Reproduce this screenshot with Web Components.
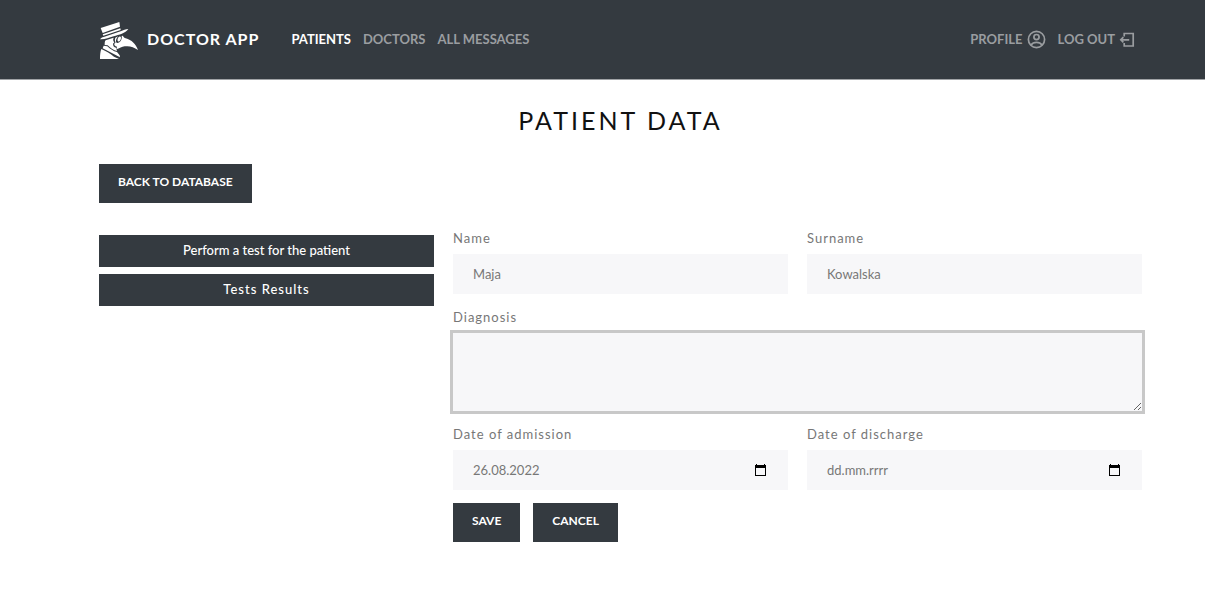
<!DOCTYPE html>
<html lang="en">
<head>
<meta charset="utf-8">
<title>Doctor App – Patient data</title>
<style>
  body { margin: 0; background: #fff; color: #111; font-family: Lato, "Open Sans", sans-serif; font-size: 13px; --dark: #343a40; --field: #f7f7f9; --muted: #777; }
  patient-page { display: block; }
</style>
</head>
<body>
<patient-page></patient-page>
<script>
const define = (name, html, setup) => customElements.define(name, class extends HTMLElement {
  connectedCallback() {
    if (this.shadowRoot) return;
    const root = this.attachShadow({ mode: 'open', delegatesFocus: true });
    const t = document.createElement('template');
    t.innerHTML = html;
    root.append(t.content.cloneNode(true));
    if (setup) setup(this, root);
  }
});

define('app-logo', `
  <style>
    :host { display: block; }
    a { display: flex; align-items: center; gap: 9px; color: #fff; text-decoration: none; font-size: 16px; line-height: 24px; font-weight: 700; letter-spacing: 1px; white-space: nowrap; }
    span { padding-bottom: 2px; }
    svg { display: block; }
  </style>
  <a href="#home">
    <svg width="39" height="38" viewBox="27 33 117 114" fill="#fff" aria-hidden="true">
      <path d="M32 54 88 36l2 14-52 19z"/>
      <path d="m38 73 53-18 1 5-52 17z"/>
      <path d="M30 88c3-4 6-6 11-7l51-17c8-3 15-7 23-7-9 13-28 17-44 22-15 4-26 10-41 9z"/>
      <path d="M47 91 71 83c-3 6-1 10 2 14l-4 4c0 7 3 10 9 12l3 10c-10-1-19-9-28-17l-9-1c0-6 0-11 3-14z"/>
      <path d="M76 83 84 79c-7 9-8 19-2 20 9 0 15-12 13-21l4-1c1 4 4 6 8 8 18 5 30 17 37 35-13-9-24-13-40-11-9 1-15 7-25 9l2-8c-6-2-9-5-8-9l4-4c-3-4-3-9-1-14z"/>
      <path d="M84 84c3-6 9-6 9 0 0 7-6 13-9 10-2-2-2-6 0-10z"/>
      <path d="m41 107 11 2c9 8 18 15 29 17l8 10 1 6-52-27z"/>
      <path d="M34 117c15 6 27 15 38 23l15 7H30c0-12 1-22 4-30z"/>
    </svg>
    <span><slot></slot></span>
  </a>`);

define('nav-link', `
  <style>
    :host { display: block; }
    a { display: flex; align-items: center; gap: 4px; color: #9a9da0; text-decoration: none; font-size: 13px; line-height: 20px; font-weight: 700; white-space: nowrap; }
    span { padding-bottom: 2px; }
    :host([active]) a { color: #fff; }
  </style>
  <a href="#"><span><slot></slot></span><slot name="icon"></slot></a>`,
  (el, root) => { root.querySelector('a').href = el.getAttribute('href') || '#'; });

define('app-header', `
  <style>
    :host { display: block; background: var(--dark); border-bottom: 1px solid #a0a3a6; }
    header { display: flex; align-items: center; justify-content: space-between; height: 79px; padding: 0 70px 0 99px; }
    .left { display: flex; align-items: center; gap: 32px; }
    nav { display: flex; align-items: center; gap: 12px; }
    svg { display: block; }
  </style>
  <header>
    <div class="left">
      <app-logo>DOCTOR APP</app-logo>
      <nav aria-label="Main">
        <nav-link active href="#patients">PATIENTS</nav-link>
        <nav-link href="#doctors">DOCTORS</nav-link>
        <nav-link href="#messages">ALL MESSAGES</nav-link>
      </nav>
    </div>
    <nav aria-label="Account">
      <nav-link href="#profile">PROFILE
        <svg slot="icon" width="19" height="19" viewBox="0 0 19 19" fill="none" stroke="#9a9da0" stroke-width="1.7" aria-hidden="true"><circle cx="9.5" cy="9.5" r="8.1"/><circle cx="9.5" cy="7.1" r="2.6"/><path d="M4 15c1.2-1.7 3.2-2.6 5.500-2.600s4.300.9 5.500 2.600"/></svg>
      </nav-link>
      <nav-link href="#logout">LOG OUT
        <svg slot="icon" width="16" height="17" viewBox="0 0 16 17" fill="none" stroke="#9a9da0" stroke-width="1.7" aria-hidden="true"><path d="M5.200 5.500V2.500h9v12.500H5.200V12M1.800 8.800h8.400M4.400 6.200 1.800 8.800l2.600 2.600"/></svg>
      </nav-link>
    </nav>
  </header>`);

define('app-button', `
  <style>
    :host { display: block; }
    button { display: block; width: 100%; height: 39px; margin: 0; padding: 0 19px 3px; border: 0; border-radius: 0; background: var(--dark); color: #fff; font: 700 12px/18px Lato, "Open Sans", sans-serif; white-space: nowrap; cursor: pointer; }
    :host([wide]) button { height: 32px; font-size: 13px; font-weight: 500; }
    :host([spaced]) button { letter-spacing: 1px; }
  </style>
  <button type="button"><slot></slot></button>`);

define('form-field', `
  <style>
    :host { display: block; }
    .field { display: flex; flex-direction: column; gap: 8px; }
    label { font-size: 13px; line-height: 16px; letter-spacing: 1px; color: var(--muted); }
    .box { display: flex; align-items: center; background: var(--field); }
    input, textarea { box-sizing: border-box; flex: 1; min-width: 0; margin: 0; border: 0; border-radius: 0; outline: 0; background: transparent; color: var(--muted); font: 400 13px/20px Lato, "Open Sans", sans-serif; }
    input { height: 40px; padding: 0 20px; }
    input::placeholder { color: var(--muted); opacity: 1; }
    textarea { height: 78px; padding: 10px 20px; resize: vertical; }
    :host([type=area]) .box { outline: 3px solid #c8c8c8; }
    button { display: block; margin: 0 20px 0 0; padding: 0; border: 0; background: none; cursor: pointer; }
    svg { display: block; }
  </style>
  <div class="field"><label for="control"><slot></slot></label><div class="box"></div></div>`,
  (el, root) => {
    const type = el.getAttribute('type');
    const control = document.createElement(type === 'area' ? 'textarea' : 'input');
    control.id = 'control';
    if (type !== 'area') control.type = 'text';
    control.value = el.getAttribute('value') || '';
    control.placeholder = el.getAttribute('placeholder') || '';
    const box = root.querySelector('.box');
    box.append(control);
    if (type === 'date') {
      box.insertAdjacentHTML('beforeend', `<button type="button" aria-label="Open calendar"><svg width="14" height="14" viewBox="0 0 14 14" aria-hidden="true"><path fill="#000" fill-rule="evenodd" d="M1 2h1V1h1v1h7V1h1v1h1v11H1zm1 3v7h9V5z"/></svg></button>`);
    }
  });

define('patient-form', `
  <style>
    :host { display: block; }
    form { display: flex; flex-direction: column; gap: 13px; }
    .fields { display: grid; grid-template-columns: 1fr 1fr; gap: 15px 19px; }
    .full { grid-column: 1 / -1; }
    .actions { display: flex; gap: 13px; }
  </style>
  <form>
    <div class="fields">
      <form-field value="Maja">Name</form-field>
      <form-field value="Kowalska">Surname</form-field>
      <form-field class="full" type="area">Diagnosis</form-field>
      <form-field type="date" value="26.08.2022">Date of admission</form-field>
      <form-field type="date" placeholder="dd.mm.rrrr">Date of discharge</form-field>
    </div>
    <div class="actions"><app-button>SAVE</app-button><app-button>CANCEL</app-button></div>
  </form>`);

define('patient-page', `
  <style>
    :host { display: block; }
    main { padding: 22px 63px 48px 99px; }
    h1 { margin: 0 0 26px; font-size: 25px; line-height: 36px; font-weight: 400; letter-spacing: 3px; text-align: center; }
    .back { display: flex; }
    .columns { display: grid; grid-template-columns: repeat(3, 1fr); gap: 19px; align-items: start; margin-top: 27px; }
    aside { display: flex; flex-direction: column; gap: 7px; padding-top: 5px; }
    patient-form { grid-column: span 2; }
  </style>
  <app-header></app-header>
  <main>
    <h1>PATIENT DATA</h1>
    <div class="back"><app-button>BACK TO DATABASE</app-button></div>
    <div class="columns">
      <aside>
        <app-button wide>Perform a test for the patient</app-button>
        <app-button wide spaced>Tests Results</app-button>
      </aside>
      <patient-form></patient-form>
    </div>
  </main>`);
</script>
</body>
</html>
